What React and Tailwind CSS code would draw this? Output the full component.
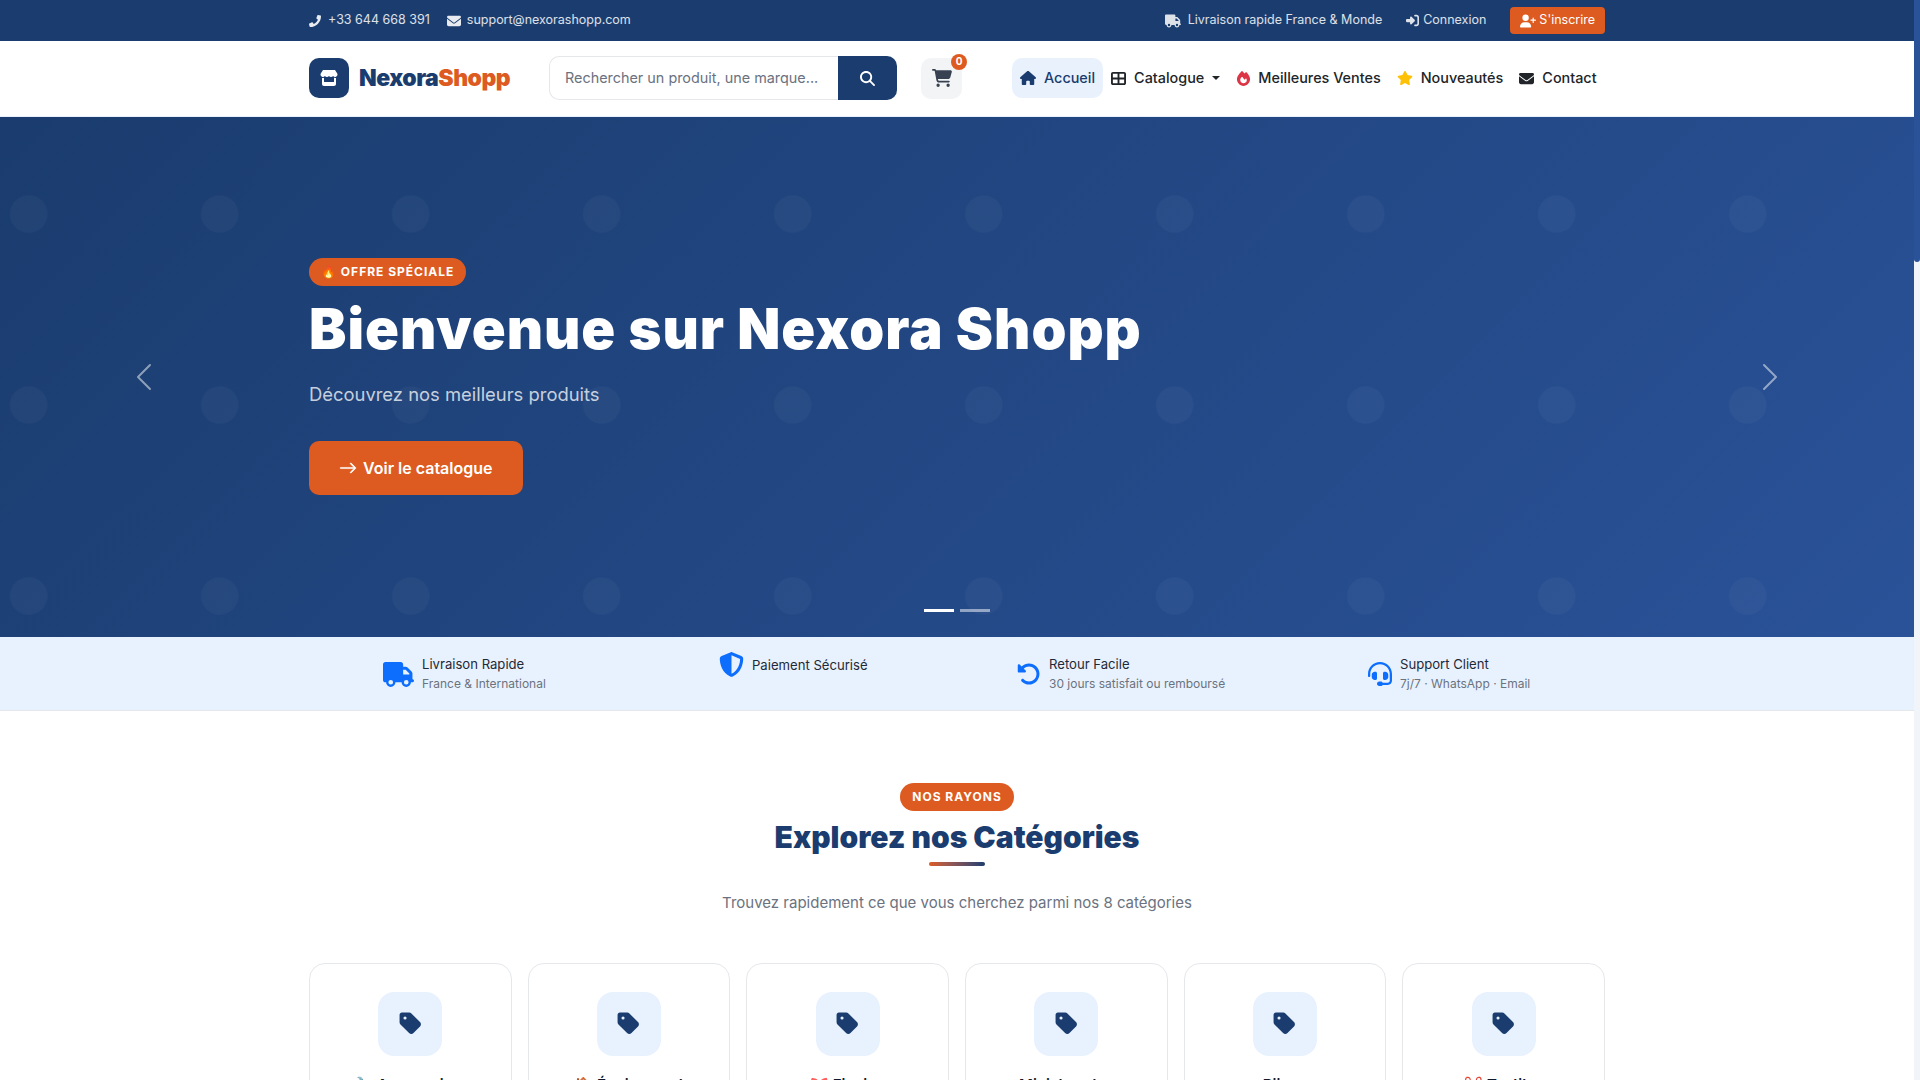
import React from 'react';
import { FaPhone } from 'react-icons/fa';
import { FaEnvelope, FaTruck, FaRightToBracket, FaUserPlus, FaStore, FaMagnifyingGlass, FaCartShopping, FaHouse, FaTableCellsLarge, FaFire, FaStar, FaShieldHalved, FaRotateLeft, FaHeadset, FaTag } from 'react-icons/fa6';
import { BsArrowRight } from 'react-icons/bs';

const features = [
  { icon: FaTruck, size: 'text-[31px]', top: 'pt-[17px]', title: 'Livraison Rapide', sub: 'France & International' },
  { icon: FaShieldHalved, size: 'text-[25px]', top: 'pt-[15px]', title: 'Paiement Sécurisé' },
  { icon: FaRotateLeft, size: 'text-[24px]', top: 'pt-[17px]', title: 'Retour Facile', sub: '30 jours satisfait ou remboursé' },
  { icon: FaHeadset, size: 'text-[24px]', top: 'pt-[17px]', title: 'Support Client', sub: '7j/7 · WhatsApp · Email' },
];

const categories = ['🔧 Accessoires', '🏠 Équipement', '🎀 Finxion', 'Ministrandes', 'Bijoux', '✂️ Textiles'];

const Chevron = ({ flip }) => (
  <svg viewBox="0 0 16 16" fill="currentColor" className={`w-8 h-8 text-white/50 ${flip ? 'rotate-180' : ''}`}>
    <path d="M11.354 1.646a.5.5 0 0 1 0 .708L5.707 8l5.647 5.646a.5.5 0 0 1-.708.708l-6-6a.5.5 0 0 1 0-.708l6-6a.5.5 0 0 1 .708 0z" />
  </svg>
);

export default function App() {
  return (
    <div className="flex h-screen overflow-hidden font-['Inter',sans-serif] text-[#212529]">
      <div className="flex-1 min-w-0">
        {/* Top bar */}
        <div className="h-[41px] bg-[#1a3c6e] text-[12.5px] text-white/85">
          <div className="w-[1296px] mx-auto h-full flex items-center justify-between">
            <div className="flex items-center gap-[17px]">
              <span className="flex items-center gap-[7px]"><FaPhone className="text-[12px] text-white/90" />+33 644 668 391</span>
              <span className="flex items-center gap-[6px]"><FaEnvelope className="text-[14px] text-white/90" />support@nexorashopp.com</span>
            </div>
            <div className="flex items-center gap-6">
              <span className="flex items-center gap-[7px]"><FaTruck className="text-[16px]" />Livraison rapide France & Monde</span>
              <span className="flex items-center gap-1"><FaRightToBracket className="text-[13px]" />Connexion</span>
              <span className="flex items-center gap-[3px] h-[27px] px-[10px] rounded bg-[#dd5b20] text-white"><FaUserPlus className="text-[16px]" />S'inscrire</span>
            </div>
          </div>
        </div>

        {/* Header */}
        <div className="h-[76px] bg-white border-b border-[#e8f1fc]">
          <div className="w-[1296px] mx-auto h-full flex items-center pb-[1px]">
            <div className="flex items-center gap-[10px] w-[240px] shrink-0">
              <div className="w-10 h-10 rounded-[10px] bg-[#1a3c6e] flex items-center justify-center text-white text-[18px]"><FaStore /></div>
              <span className="text-[23px] font-black tracking-[-0.5px]">
                <span className="text-[#1a3c6e]">Nexora</span><span className="text-[#dd5b20]">Shopp</span>
              </span>
            </div>
            <div className="flex w-[348px] h-11 shrink-0">
              <div className="flex-1 flex items-center pl-[15px] border border-[#e5e7eb] border-r-0 rounded-l-[10px] text-[14.4px] text-[#6b7280] whitespace-nowrap">Rechercher un produit, une marque...</div>
              <div className="w-[59px] bg-[#1a3c6e] rounded-r-[10px] flex items-center justify-center text-white text-[15px]"><FaMagnifyingGlass /></div>
            </div>
            <div className="relative ml-6 w-[41px] h-[41px] shrink-0 rounded-[10px] bg-[#f3f4f6] flex items-center justify-center text-[#374151] text-[20px]">
              <FaCartShopping />
              <span className="absolute -top-[4px] -right-[5px] w-4 h-4 rounded-full bg-[#dd5b20] text-white text-[10px] font-bold flex items-center justify-center">0</span>
            </div>
            <nav className="ml-[50px] flex items-center text-[14.4px] font-medium whitespace-nowrap shrink-0">
              <span className="flex items-center gap-2 h-10 px-2 rounded-[10px] bg-[#e8f1fc] text-[#1a3c6e]"><FaHouse className="text-[16px]" />Accueil</span>
              <span className="flex items-center gap-2 h-10 px-2"><FaTableCellsLarge className="text-[15px]" />Catalogue<span className="border-x-4 border-x-transparent border-t-4 border-t-current" /></span>
              <span className="flex items-center gap-[7px] h-10 px-2"><FaFire className="text-[15px] text-[#dc3545]" />Meilleures Ventes</span>
              <span className="flex items-center gap-2 h-10 px-2"><FaStar className="text-[16px] text-[#ffc107]" />Nouveautés</span>
              <span className="flex items-center gap-2 h-10 px-2"><FaEnvelope className="text-[15px]" />Contact</span>
            </nav>
          </div>
        </div>

        {/* Hero */}
        <div className="relative h-[520px] bg-[radial-gradient(circle_at_28.7px_97px,rgba(255,255,255,0.03)_18px,transparent_19.5px),linear-gradient(135deg,#1a3c6e,#2a5298)] bg-[size:191px_191px,100%_100%]">
          <div className="w-[1296px] mx-auto h-full flex flex-col items-start justify-center pb-[1px]">
            <span className="flex items-center gap-1 h-7 px-3 rounded-full bg-[#dd5b20] text-white text-[12px] font-bold tracking-[1px]">🔥 OFFRE SPÉCIALE</span>
            <h1 className="mt-[10px] text-[56px] leading-[1.2] font-black text-white tracking-[1px]">Bienvenue sur Nexora Shopp</h1>
            <p className="mt-[18px] text-[18.4px] text-white/75">Découvrez nos meilleurs produits</p>
            <button className="mt-[33px] flex items-center gap-[6px] h-[54px] pl-[30px] pr-[31px] rounded-[10px] bg-[#dd5b20] text-white text-[16px] font-semibold"><BsArrowRight className="text-[18px] stroke-current stroke-[0.5]" />Voir le catalogue</button>
          </div>
          <div className="absolute left-[128px] top-1/2 -translate-y-1/2"><Chevron /></div>
          <div className="absolute right-[128px] top-1/2 -translate-y-1/2"><Chevron flip /></div>
          <div className="absolute bottom-[25px] left-0 right-0 flex justify-center gap-[6px]">
            <span className="w-[30px] h-[3px] bg-white" />
            <span className="w-[30px] h-[3px] bg-white/50" />
          </div>
        </div>

        {/* Features */}
        <div className="h-[74px] bg-[#e8f2fe] border-b border-[#e5e7eb]">
          <div className="w-[1296px] mx-auto h-full grid grid-cols-[336px_298px_351px_311px]">
            {features.map((f) => (
              <div key={f.title} className={`flex items-center self-start gap-2 pl-[74px] whitespace-nowrap ${f.top}`}>
                <f.icon className={`${f.size} text-[#0d6efd] shrink-0`} />
                <div>
                  <div className="text-[13.12px] leading-[20px] text-[#1f2937]">{f.title}</div>
                  {f.sub && <div className="text-[12px] leading-[20px] text-[#6b7280]">{f.sub}</div>}
                </div>
              </div>
            ))}
          </div>
        </div>

        {/* Categories */}
        <div className="w-[1296px] mx-auto pt-[72px] flex flex-col items-center">
          <span className="flex items-center h-7 px-3 rounded-full bg-[#dd5b20] text-white text-[12px] font-bold tracking-[1px]">NOS RAYONS</span>
          <h2 className="mt-[7px] text-[30px] leading-[1.3] font-black text-[#1a3c6e]">Explorez nos Catégories</h2>
          <div className="mt-[5px] w-14 h-1 rounded bg-gradient-to-r from-[#dd5b20] to-[#1a3c6e]" />
          <p className="mt-[26px] text-[15px] text-[#6b7280]">Trouvez rapidement ce que vous cherchez parmi nos 8 catégories</p>
          <div className="mt-[48px] w-full grid grid-cols-6 gap-[16px]">
            {categories.map((c) => (
              <div key={c} className="h-[220px] rounded-2xl border border-[#e5e7eb] flex flex-col items-center pt-7">
                <div className="w-16 h-16 rounded-2xl bg-[#e8f2fe] flex items-center justify-center text-[#1a3c6e] text-[25px]"><FaTag /></div>
                <div className="mt-[18px] text-[15px] font-semibold text-[#111827]">{c}</div>
              </div>
            ))}
          </div>
        </div>
      </div>

      {/* Scrollbar */}
      <div className="w-[6px] shrink-0 bg-[#f1f5f9]">
        <div className="h-[262px] bg-[#2a5298] rounded-b-sm" />
      </div>
    </div>
  );
}
